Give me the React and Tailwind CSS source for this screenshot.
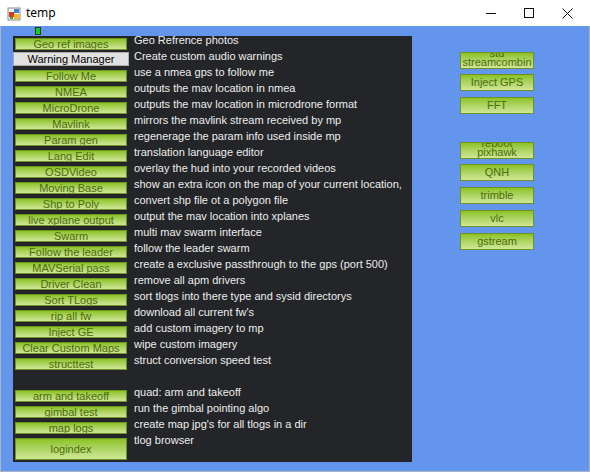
import React from "react";

const rows = [
	["Geo ref images", "Geo Refrence photos"],
	["Warning Manager", "Create custom audio warnings", "plain"],
	["Follow Me", "use a nmea gps to follow me"],
	["NMEA", "outputs the mav location in nmea"],
	["MicroDrone", "outputs the mav location in microdrone format"],
	["Mavlink", "mirrors the mavlink stream received by mp"],
	["Param gen", "regenerage the param info used inside mp"],
	["Lang Edit", "translation language editor"],
	["OSDVideo", "overlay the hud into your recorded videos"],
	["Moving Base", "show an extra icon on the map of your current location,"],
	["Shp to Poly", "convert shp file ot a polygon file"],
	["live xplane output", "output the mav location into xplanes"],
	["Swarm", "multi mav swarm interface"],
	["Follow the leader", "follow the leader swarm"],
	["MAVSerial pass", "create a exclusive passthrough to the gps (port 500)"],
	["Driver Clean", "remove all apm drivers"],
	["Sort TLogs", "sort tlogs into there type and sysid directorys"],
	["rip all fw", "download all current fw's"],
	["Inject GE", "add custom imagery to mp"],
	["Clear Custom Maps", "wipe custom imagery"],
	["structtest", "struct conversion speed test"],
	null,
	["arm and takeoff", "quad: arm and takeoff"],
	["gimbal test", "run the gimbal pointing algo"],
	["map logs", "create map jpg's for all tlogs in a dir"],
	["logindex", "tlog browser", "tall"],
];

const green =
	"border border-[#6f9226] bg-gradient-to-b from-[#8dc21c] to-[#d0e795] text-[#4d6c10] flex items-center overflow-hidden";

function Row({ row }) {
	if (!row) return <div className="h-[16px]" />;
	const [label, text, kind] = row;
	return (
		<div className="flex h-[16px] items-start">
			<div className="w-[121px] shrink-0">
				{kind === "plain" ? (
					<div className="-mt-px h-[14px] w-[116px] border border-[#adadad] bg-[#e1e1e1] text-black flex items-center justify-center leading-[12px]">
						{label}
					</div>
				) : (
					<div className={`${green} leading-[11px] justify-center ml-[2px] mt-px w-[112px] ${kind === "tall" ? "h-[22px]" : "h-[12px]"}`}>
						{label}
					</div>
				)}
			</div>
			<div className="-mt-[3px] whitespace-nowrap leading-[12px] text-[#ededed]">{text}</div>
		</div>
	);
}

function SideButton({ children, className = "", wrap = false }) {
	return (
		<div
			className={`${green} h-[17px] w-[74px] flex-col ${wrap ? "justify-end pb-[1px] leading-[9px]" : "justify-center leading-[11px]"} ${className}`}>
			{children}
		</div>
	);
}

function AppIcon() {
	return (
		<svg width="14" height="14" viewBox="0 0 14 14">
			<rect x="1" y="1" width="12" height="12" fill="#f4f4f4" stroke="#8a8a8a" />
			<rect x="7" y="2" width="5" height="4" fill="#4a7fd0" />
			<rect x="2" y="5" width="5" height="5" fill="#d23a2a" />
			<rect x="7" y="7" width="5" height="5" fill="#f2b81c" />
			<rect x="3" y="10" width="3" height="2" fill="#3a9a3a" />
		</svg>
	);
}

export default function App() {
	return (
		<div className="w-[590px] h-[472px] flex flex-col font-['Liberation_Sans',Arial,sans-serif] text-[11px]">
			<div className="h-[26px] bg-white flex items-center shrink-0">
				<div className="ml-[7px] mt-[1px]">
					<AppIcon />
				</div>
				<span className="ml-[5px] text-[12px] text-black font-['Noto_Sans',sans-serif]">temp</span>
				<div className="ml-auto flex items-center">
					<div className="w-[36px] flex justify-center">
						<svg width="10" height="10" viewBox="0 0 10 10">
							<line x1="0" y1="5.5" x2="10" y2="5.5" stroke="#111" strokeWidth="1" />
						</svg>
					</div>
					<div className="w-[36px] flex justify-center ml-[2px]">
						<svg width="10" height="10" viewBox="0 0 10 10">
							<rect x="0.5" y="0.5" width="9" height="9" fill="none" stroke="#111" strokeWidth="1" />
						</svg>
					</div>
					<div className="w-[40px] flex justify-center mr-[3px]">
						<svg width="11" height="11" viewBox="0 0 11 11">
							<path d="M0.5 0.5 L10.5 10.5 M10.5 0.5 L0.5 10.5" stroke="#111" strokeWidth="1" />
						</svg>
					</div>
				</div>
			</div>

			<div className="relative flex-1 flex bg-[#6495ed] border-x border-b border-[#a9b4c6]">
				<div className="absolute left-[34px] top-px h-[8px] w-[6px] border border-[#1d3a1d] bg-[#10d020]" />

				<div className="ml-[12px] mt-[10px] h-[426px] w-[399px] bg-[#242528] pt-px">
					{rows.map((r, i) => (
						<Row key={i} row={r} />
					))}
				</div>

				<div className="ml-[48px] mt-[26px] flex flex-col">
					<SideButton wrap>
						<span className="block">stu</span>
						<span className="block">streamcombin</span>
					</SideButton>
					<SideButton className="mt-[5px]">Inject GPS</SideButton>
					<SideButton className="mt-[6px]">FFT</SideButton>
					<SideButton wrap className="mt-[28px]">
						<span className="block">reboot</span>
						<span className="block">pixhawk</span>
					</SideButton>
					<SideButton className="mt-[5px]">QNH</SideButton>
					<SideButton className="mt-[6px]">trimble</SideButton>
					<SideButton className="mt-[6px]">vlc</SideButton>
					<SideButton className="mt-[6px]">gstream</SideButton>
				</div>
			</div>
		</div>
	);
}
